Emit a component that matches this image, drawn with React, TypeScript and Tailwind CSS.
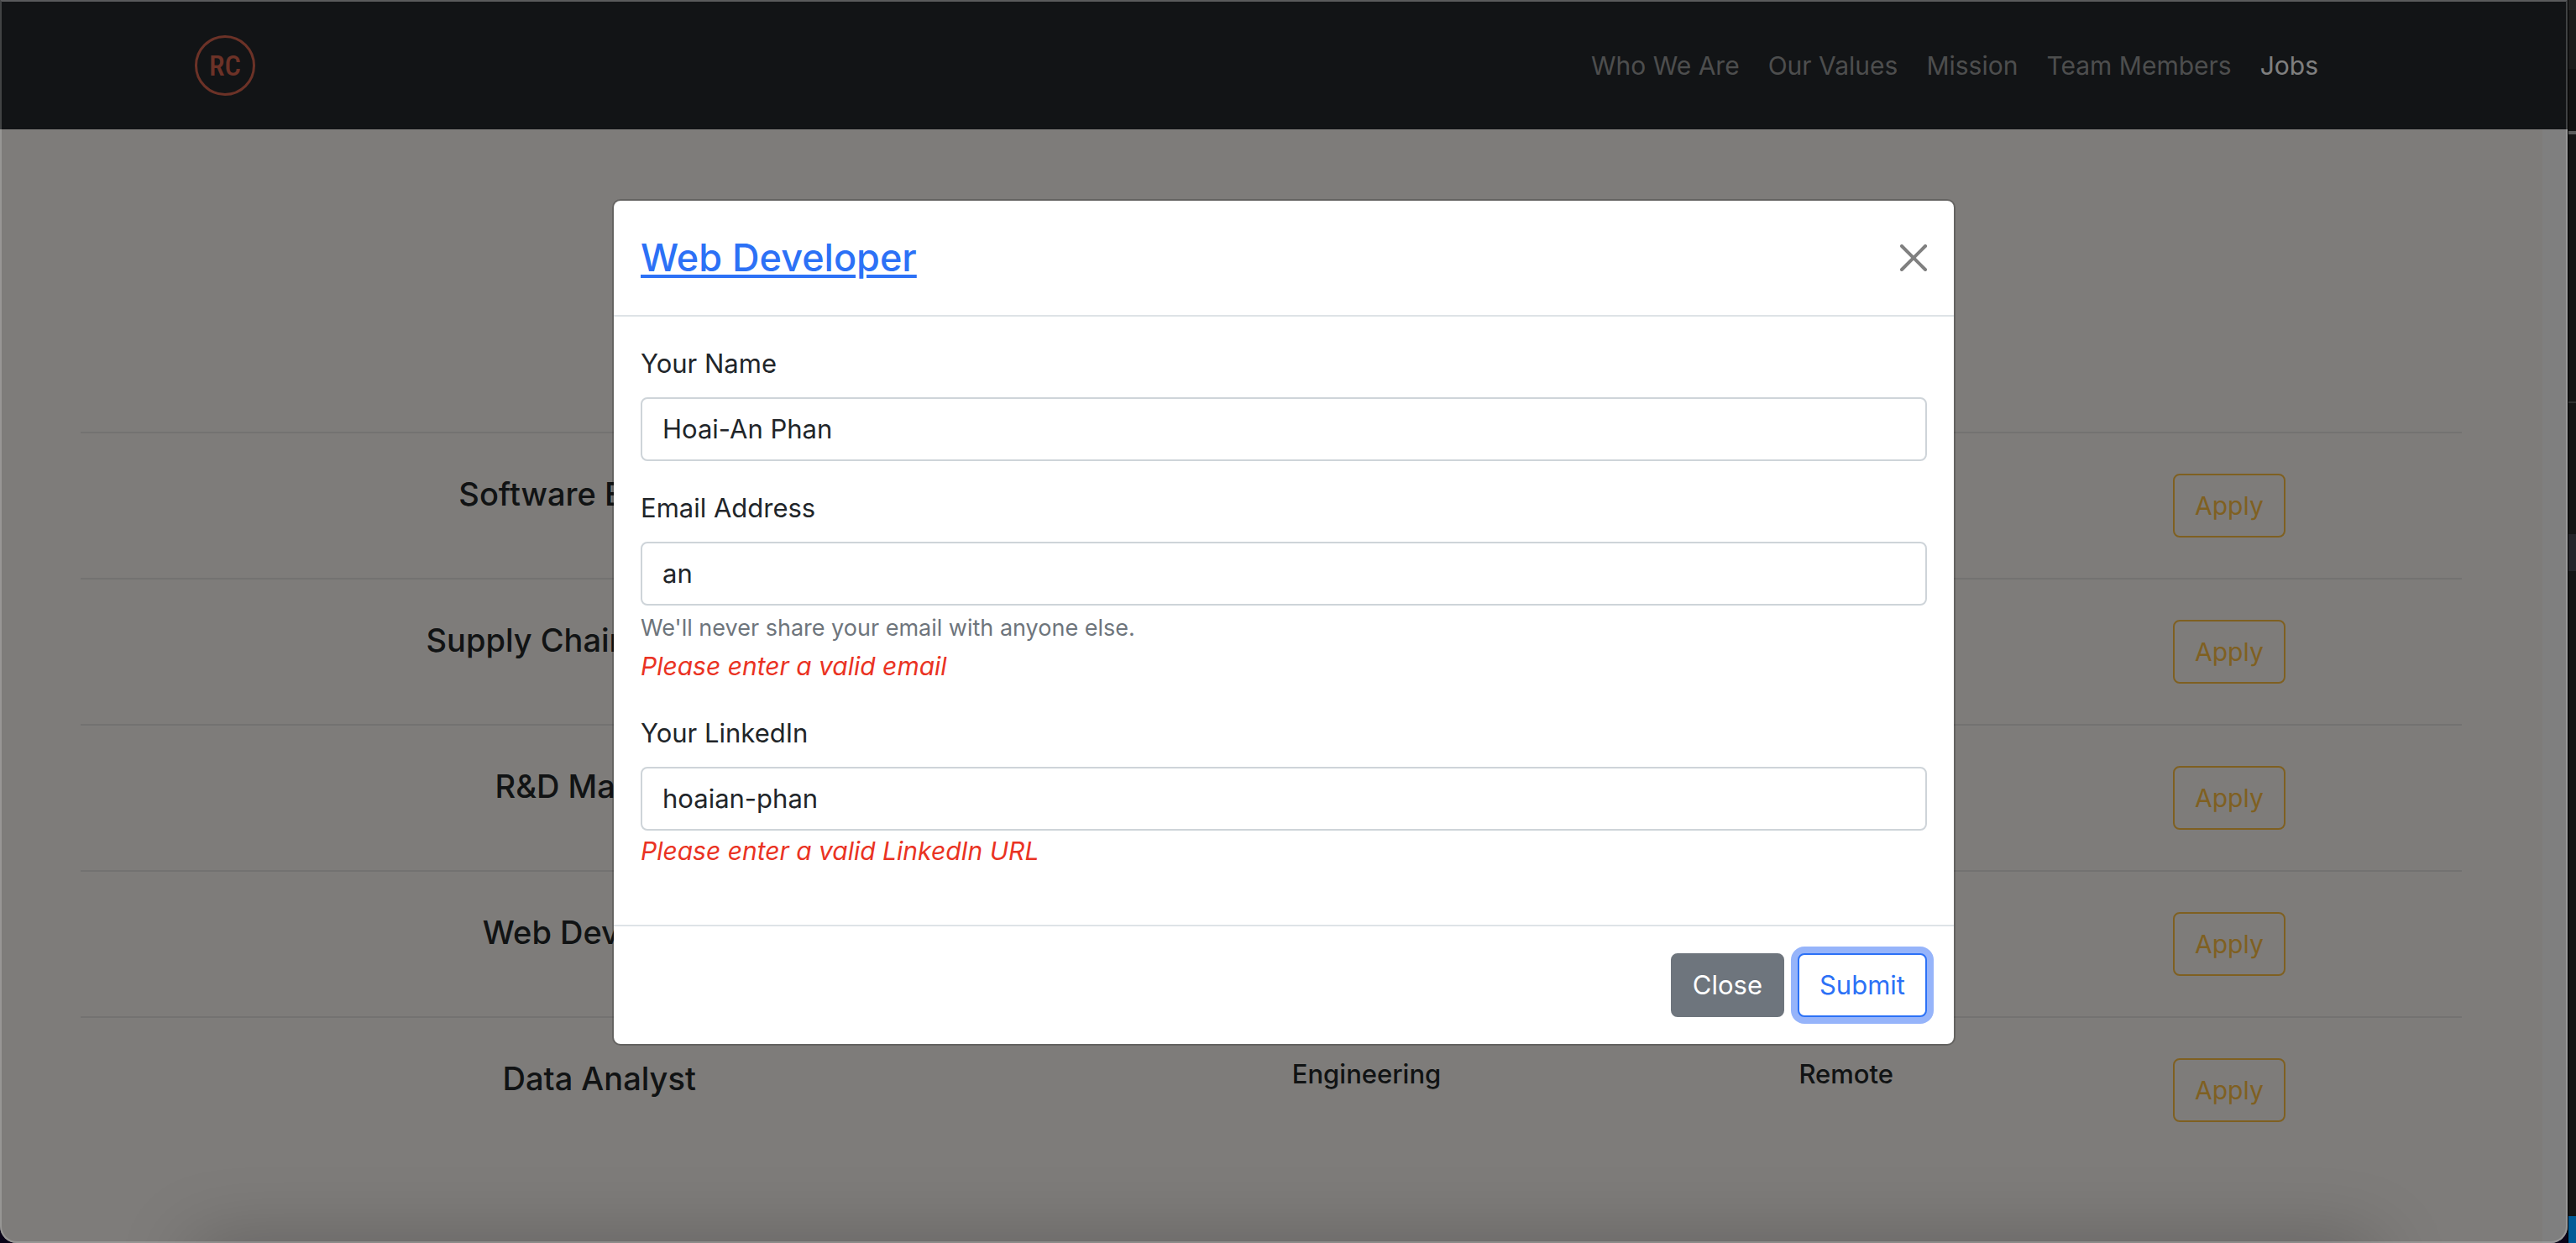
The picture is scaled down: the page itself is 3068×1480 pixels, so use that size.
import React from "react";

const NAV_LINKS = ["Who We Are", "Our Values", "Mission", "Team Members", "Jobs"];

type Job = { title: string; department?: string; location?: string };

const JOBS: Job[] = [
  { title: "Software Engineer" },
  { title: "Supply Chain Manager" },
  { title: "R&D Manager" },
  { title: "Web Developer" },
  { title: "Data Analyst", department: "Engineering", location: "Remote" },
];

function Logo() {
  return (
    <a
      href="#home"
      aria-label="RC home"
      className="flex size-[72px] items-center justify-center rounded-full border-3 border-[#d9654f] font-['Liberation_Sans_Narrow','Roboto_Condensed','Roboto',sans-serif] text-[34px] leading-none font-medium text-[#d9654f]"
    >
      RC
    </a>
  );
}

function Navbar() {
  return (
    <header className="flex h-[154px] shrink-0 items-center justify-between bg-[#24282c] pt-0.5 pr-[297px] pl-[232px]">
      <Logo />
      <nav className="flex gap-[34px] text-[30px] leading-[48px]">
        {NAV_LINKS.map((label) => (
          <a
            key={label}
            href={"#" + label}
            className={label === "Jobs" ? "text-[#ffffff]" : "text-[#9b9c9d]"}
          >
            {label}
          </a>
        ))}
      </nav>
    </header>
  );
}

function JobRow({ job }: { job: Job }) {
  return (
    <li className="grid grid-cols-[1043fr_784fr_358fr_554fr] items-start border-t-2 border-[#e6e5e2] py-12 pl-24 text-center font-medium text-[#222628]">
      <h2 className="text-[38px] leading-[48px]">{job.title}</h2>
      <p className="text-[31px] leading-[38px]">{job.department}</p>
      <p className="text-[31px] leading-[38px]">{job.location}</p>
      <div className="flex justify-center">
        <button
          type="button"
          className="rounded-lg border-2 border-[#ffc043] px-6 py-3 text-[30px] leading-[48px] font-normal text-[#ffc043]"
        >
          Apply
        </button>
      </div>
    </li>
  );
}

type FieldProps = {
  id: string;
  label: string;
  value: string;
  help?: string;
  error?: string;
};

function Field({ id, label, value, help, error }: FieldProps) {
  return (
    <div className="mb-8 flex flex-col">
      <label htmlFor={id} className="mb-4 leading-[48px]">
        {label}
      </label>
      <input
        id={id}
        type="text"
        defaultValue={value}
        className="w-full rounded-lg border-2 border-[#ced4d9] bg-white px-6 py-3 leading-[48px] outline-none"
      />
      {help && <p className="mt-1.5 text-[27px] leading-[42px] text-[#6e757c]">{help}</p>}
      {error && <p className="text-[30px] leading-[48px] text-[#ea3323] italic">{error}</p>}
    </div>
  );
}

function ApplyDialog() {
  return (
    <div
      role="dialog"
      aria-labelledby="dialog-title"
      className="w-full max-w-[1600px] rounded-[10px] border-2 border-black/20 bg-white bg-clip-padding text-[31px] text-[#212529]"
    >
      <div className="flex items-center justify-between border-b-2 border-[#dee3e7] p-8">
        <h1 id="dialog-title" className="text-[45px] leading-[72px] font-medium">
          <a
            href="#web-developer"
            className="text-[#2c71f6] underline decoration-4 underline-offset-4"
          >
            Web Developer
          </a>
        </h1>
        <button type="button" aria-label="Close dialog" className="text-[#808080]">
          <svg viewBox="0 0 16 16" className="size-8" fill="currentColor">
            <path d="M.293.293a1 1 0 0 1 1.414 0L8 6.586 14.293.293a1 1 0 1 1 1.414 1.414L9.414 8l6.293 6.293a1 1 0 0 1-1.414 1.414L8 9.414l-6.293 6.293a1 1 0 0 1-1.414-1.414L6.586 8 .293 1.707a1 1 0 0 1 0-1.414z" />
          </svg>
        </button>
      </div>
      <form className="p-8">
        <Field id="name" label="Your Name" value="Hoai-An Phan" />
        <Field
          id="email"
          label="Email Address"
          value="an"
          help="We'll never share your email with anyone else."
          error="Please enter a valid email"
        />
        <Field
          id="linkedin"
          label="Your LinkedIn"
          value="hoaian-phan"
          error="Please enter a valid LinkedIn URL"
        />
      </form>
      <div className="flex justify-end gap-4 border-t-2 border-[#dee3e7] p-8">
        <button
          type="button"
          className="rounded-lg border-2 border-[#6e757d] bg-[#6e757d] px-6 py-3 leading-[48px] text-white"
        >
          Close
        </button>
        <button
          type="submit"
          className="rounded-lg border-2 border-[#2c71f6] bg-white px-6 py-3 leading-[48px] text-[#2c71f6] ring-8 ring-[#96b4fa]"
        >
          Submit
        </button>
      </div>
    </div>
  );
}

function DesktopEdge() {
  return (
    <div className="flex w-[10px] shrink-0 flex-col border-l border-black bg-[#151515]">
      <div className="h-3 bg-[#262626]" />
      <div className="h-[70px] bg-[#1b1b1b]" />
      <div className="h-[74px] bg-[#131313]" />
      <div className="h-1 bg-[#5c5c5c]" />
      <div className="h-[318px]" />
      <div className="h-0.5 bg-[#303030]" />
      <div className="h-[156px]" />
      <div className="h-11 bg-[#25252a]" />
      <div className="grow" />
      <div className="h-8 bg-[#005b97]" />
    </div>
  );
}

export default function App() {
  return (
    <div className="flex min-h-screen overflow-hidden bg-[#0a0418] font-['Inter','Liberation_Sans',sans-serif]">
      <div className="relative flex min-w-0 grow flex-col overflow-hidden rounded-b-[20px]">
        <Navbar />
        <div className="flex grow">
          <main className="grow bg-[#fcf9f4] px-24 pt-[360px]">
            <ul>
              {JOBS.map((job) => (
                <JobRow key={job.title} job={job} />
              ))}
            </ul>
          </main>
          <div className="w-[30px] shrink-0 bg-white" />
        </div>
        <div className="absolute inset-0 flex items-center justify-center bg-black/50 pt-0.5">
          <ApplyDialog />
        </div>
        <div className="absolute inset-x-[230px] top-full h-20 shadow-[0_0_90px_rgba(0,0,0,0.24)]" />
        <div className="pointer-events-none absolute inset-0 rounded-b-[20px] border-2 border-white/20 border-t-white/30" />
      </div>
      <DesktopEdge />
    </div>
  );
}
